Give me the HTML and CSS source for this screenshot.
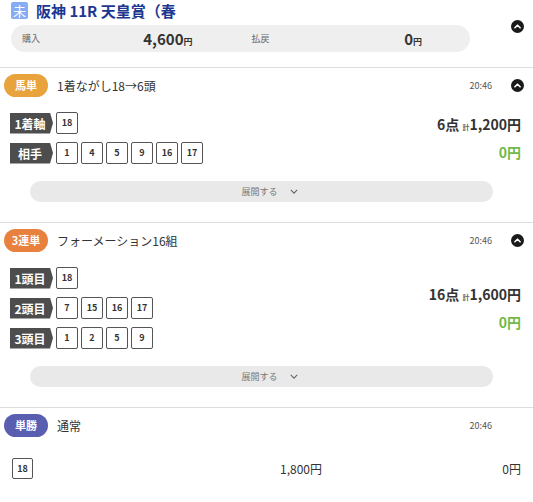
FILE: index.html
```html
<!DOCTYPE html>
<html lang="ja">
    <head>
        <meta charset="utf-8">
        <title>購入履歴</title>
        <link rel="stylesheet" href="styles.css">
    </head>
    <body>
        <!-- race header with the total purchase / payout -->
        <div class="race">
            <div class="race-main">
                <div class="race-head">
                    <span class="race-mark">未</span>
                    <h1 class="race-name">阪神 11R 天皇賞（春</h1>
                </div>
                <div class="summary">
                    <div class="sum-cell"><span class="sum-label">購入</span><span class="sum-value">4,600<small>円</small></span></div>
                    <div class="sum-cell"><span class="sum-label">払戻</span><span class="sum-value">0<small>円</small></span></div>
                </div>
            </div>
            <span class="circle-btn race-toggle"><svg viewBox="0 0 14 14" width="13" height="13"><circle cx="7" cy="7" r="7" fill="#1a1a1a"/><path d="M4.2 8.4 7 5.6 9.8 8.4" fill="none" stroke="#fff" stroke-width="1.7" stroke-linecap="round" stroke-linejoin="round"/></svg></span>
        </div>

        <!-- bet 1 -->
        <section class="bet">
            <div class="bet-head">
                <span class="badge badge-umatan">馬単</span>
                <span class="bet-title">1着ながし18→6頭</span>
                <span class="bet-time">20:46</span>
                <span class="circle-btn"><svg viewBox="0 0 14 14" width="13" height="13"><circle cx="7" cy="7" r="7" fill="#1a1a1a"/><path d="M4.2 8.4 7 5.6 9.8 8.4" fill="none" stroke="#fff" stroke-width="1.7" stroke-linecap="round" stroke-linejoin="round"/></svg></span>
            </div>
            <div class="bet-body">
                <div class="picks">
                    <div class="pick-row"><span class="pick-tag">1着軸</span><span class="num">18</span></div>
                    <div class="pick-row"><span class="pick-tag">相手</span><span class="num">1</span><span class="num">4</span><span class="num">5</span><span class="num">9</span><span class="num">16</span><span class="num">17</span></div>
                </div>
                <div class="bet-amount">
                    <div class="bet-cost">6点 <small>計</small>1,200円</div>
                    <div class="bet-pay">0円</div>
                </div>
            </div>
            <div class="expand">展開する <svg viewBox="0 0 10 6" width="8" height="5"><path d="M1 1 5 5 9 1" fill="none" stroke="#666" stroke-width="1.4"/></svg></div>
        </section>

        <!-- bet 2 -->
        <section class="bet">
            <div class="bet-head">
                <span class="badge badge-sanrentan">3連単</span>
                <span class="bet-title">フォーメーション16組</span>
                <span class="bet-time">20:46</span>
                <span class="circle-btn"><svg viewBox="0 0 14 14" width="13" height="13"><circle cx="7" cy="7" r="7" fill="#1a1a1a"/><path d="M4.2 8.4 7 5.6 9.8 8.4" fill="none" stroke="#fff" stroke-width="1.7" stroke-linecap="round" stroke-linejoin="round"/></svg></span>
            </div>
            <div class="bet-body">
                <div class="picks">
                    <div class="pick-row"><span class="pick-tag">1頭目</span><span class="num">18</span></div>
                    <div class="pick-row"><span class="pick-tag">2頭目</span><span class="num">7</span><span class="num">15</span><span class="num">16</span><span class="num">17</span></div>
                    <div class="pick-row"><span class="pick-tag">3頭目</span><span class="num">1</span><span class="num">2</span><span class="num">5</span><span class="num">9</span></div>
                </div>
                <div class="bet-amount">
                    <div class="bet-cost">16点 <small>計</small>1,600円</div>
                    <div class="bet-pay">0円</div>
                </div>
            </div>
            <div class="expand">展開する <svg viewBox="0 0 10 6" width="8" height="5"><path d="M1 1 5 5 9 1" fill="none" stroke="#666" stroke-width="1.4"/></svg></div>
        </section>

        <!-- bet 3 (single, no toggle) -->
        <section class="bet bet-last">
            <div class="bet-head no-toggle">
                <span class="badge badge-tansho">単勝</span>
                <span class="bet-title">通常</span>
                <span class="bet-time">20:46</span>
            </div>
            <div class="single-row">
                <span class="num">18</span>
                <span class="single-cost">1,800円</span>
                <span class="single-pay">0円</span>
            </div>
        </section>
    </body>
</html>
```

FILE: styles.css
```css
body {
    margin: 0;
    font-family: "Noto Sans CJK JP", "DejaVu Sans", sans-serif;
    color: #333;
    background: #fff;
}

/** race header **/
.race {
    display: flex;
    padding: 2px 9px 15px 11px;
    border-bottom: 1px solid #ddd;
}

.race-main {
    width: 459px;
}

.race-head {
    display: flex;
    align-items: center;
    height: 17px;
    gap: 8px;
}

.race-mark {
    width: 17px;
    height: 17px;
    border-radius: 2px;
    background: #86acf4;
    color: #fff;
    font-size: 13px;
    line-height: 17px;
    text-align: center;
}

.race-name {
    margin: 0;
    font-size: 15px;
    font-weight: bold;
    color: #1d3791;
    white-space: nowrap;
    line-height: 17px;
}

.summary {
    margin-top: 6px;
    height: 27px;
    border-radius: 14px;
    background: #efefef;
    display: grid;
    grid-template-columns: 1fr 1fr;
    column-gap: 59px;
    padding: 0 48px 0 11px;
    align-items: center;
}

.sum-cell {
    display: flex;
    justify-content: space-between;
    align-items: center;
}

.sum-label {
    font-size: 9px;
    color: #666;
}

.sum-value {
    font-size: 15px;
    font-weight: bold;
    color: #333;
}

.sum-value small {
    font-size: 9px;
}

.circle-btn {
    display: block;
    width: 13px;
    height: 13px;
}

.circle-btn svg {
    display: block;
}

.race-toggle {
    margin-left: auto;
    margin-top: 18px;
}

/** bets **/
.bet {
    border-bottom: 1px solid #ddd;
    padding: 6px 0 20px 0;
}

.bet-last {
    border-bottom: none;
}

.bet-head {
    display: flex;
    align-items: center;
    padding: 0 9px 0 4px;
}

.bet-head.no-toggle {
    padding-right: 41px;
}

.badge {
    width: 44px;
    height: 23px;
    border-radius: 12px;
    color: #fff;
    font-size: 11px;
    font-weight: bold;
    line-height: 23px;
    text-align: center;
}

.badge-umatan { background: #e8a33c; }
.badge-sanrentan { background: #e8803e; }
.badge-tansho { background: #595eb0; }

.bet-title {
    margin-left: 9px;
    font-size: 12px;
    color: #333;
}

.bet-time {
    margin-left: auto;
    margin-right: 19px;
    font-size: 9px;
    color: #555;
}

.no-toggle .bet-time {
    margin-right: 0;
}

.bet-body {
    display: flex;
    align-items: center;
    margin-top: 15px;
    padding: 0 12px 0 10px;
}

.picks {
    display: flex;
    flex-direction: column;
    gap: 8px;
}

.pick-row {
    display: flex;
    align-items: center;
    gap: 3px;
}

.pick-tag {
    width: 43px;
    height: 21px;
    background: #4d4d4d;
    color: #fff;
    font-size: 12px;
    font-weight: bold;
    line-height: 21px;
    padding-right: 3px;
    box-sizing: border-box;
    text-align: center;
    clip-path: polygon(0 0, 40px 0, 100% 50%, 40px 100%, 0 100%);
}

.num {
    width: 22px;
    height: 22px;
    box-sizing: border-box;
    border: 1px solid #555;
    border-radius: 2px;
    font-size: 9px;
    font-weight: bold;
    color: #333;
    line-height: 20px;
    text-align: center;
}

.bet-amount {
    margin-left: auto;
    display: flex;
    flex-direction: column;
    align-items: flex-end;
    gap: 8px;
}

.bet-cost {
    font-size: 14px;
    font-weight: bold;
    color: #333;
}

.bet-cost small {
    font-size: 7px;
    color: #666;
}

.bet-pay {
    font-size: 14px;
    font-weight: bold;
    color: #72b84a;
}

.expand {
    margin: 17px 40px 0 30px;
    height: 21px;
    border-radius: 11px;
    background: #e9e9e9;
    display: flex;
    justify-content: center;
    align-items: center;
    gap: 12px;
    font-size: 9px;
    color: #777;
    padding-left: 16px;
}

/** single bet row **/
.single-row {
    display: grid;
    grid-template-columns: 1fr auto 199px;
    align-items: center;
    margin-top: 21px;
    padding: 0 12px;
}

.single-row .num {
    width: 21px;
    height: 21px;
}

.single-cost {
    font-size: 12px;
    color: #333;
}

.single-pay {
    font-size: 12px;
    color: #333;
    text-align: right;
}
```
